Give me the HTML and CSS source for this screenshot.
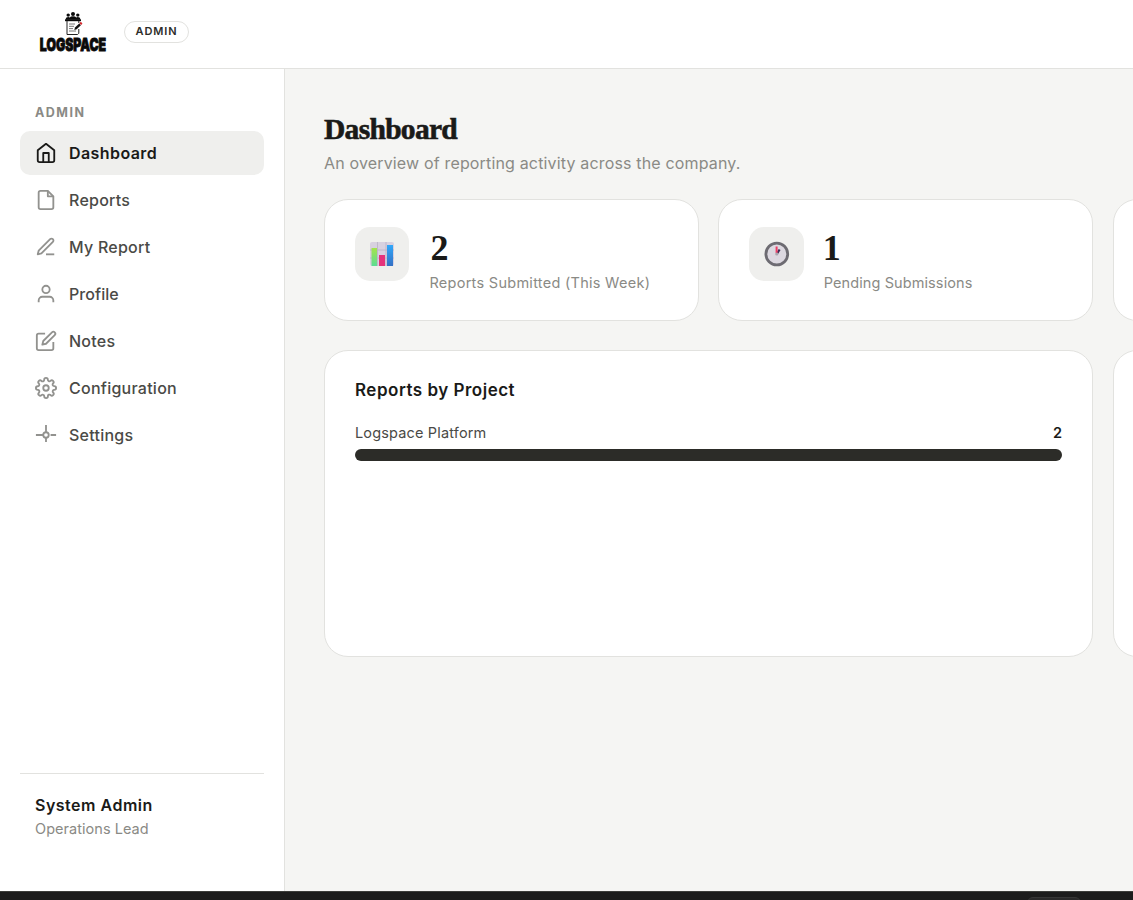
FILE: index.html
```html
<!DOCTYPE html>
<html lang="en">
<head>
<meta charset="utf-8">
<title>Logspace Dashboard</title>
<link rel="stylesheet" href="styles.css">
</head>
<body>
<div class="app">
  <header class="topbar">
    <svg class="logo" width="68" height="46" viewBox="0 0 68 46" role="img" aria-label="Logspace">
      <g fill="#0a0a0a">
        <circle cx="29.200" cy="4.100" r="1.700"/><circle cx="34" cy="3" r="2"/><circle cx="38.800" cy="4.100" r="1.700"/>
        <path d="M26.800 8.800V7.500q0-1.500 2.400-1.500 1.200 0 1.600.6Q31.500 5.300 34 5.300t3.200 1.300q.4-.6 1.600-.6 2.400 0 2.400 1.500V8.800z"/>
        <path d="M26 8.300h16v1.900H26z"/>
      </g>
      <path d="M28 10v13.500h10.600l1.200-1.200V18M39.800 12v-2" fill="none" stroke="#222" stroke-width="1"/>
      <path d="M30 13h6M30 15.300h5M30 17.600h4M30 20h7" stroke="#555" stroke-width=".8"/>
      <path d="M35.300 19l.7-2.400 4.200-4.100 1.700 1.700-4.200 4.100z" fill="#111"/>
      <path d="M40.300 12.300l1-1q.5-.5 1 0l.8.8q.5.500 0 1l-1 1z" fill="#d3262b"/>
      <text class="logo-word" x="0.800" y="39.600" textLength="66.300" lengthAdjust="spacingAndGlyphs">LOGSPACE</text>
    </svg>
    <span class="role-badge">ADMIN</span>
  </header>
  <div class="body">
    <aside class="sidebar">
      <div class="nav-heading">ADMIN</div>
      <nav class="nav">
        <a class="nav-item active"><svg class="icon" viewBox="0 0 24 24"><path d="M3 9l9-7 9 7v11a2 2 0 0 1-2 2H5a2 2 0 0 1-2-2z"/><path d="M9 22V12h6v10"/></svg><span>Dashboard</span></a>
        <a class="nav-item"><svg class="icon" viewBox="0 0 24 24"><path d="M14 2H6a2 2 0 0 0-2 2v16a2 2 0 0 0 2 2h12a2 2 0 0 0 2-2V8z"/><path d="M14 2v6h6"/></svg><span>Reports</span></a>
        <a class="nav-item"><svg class="icon" viewBox="0 0 24 24"><path d="M12 20h9"/><path d="M16.500 3.500a2.121 2.121 0 0 1 3 3L7 19l-4 1 1-4z"/></svg><span>My Report</span></a>
        <a class="nav-item"><svg class="icon" viewBox="0 0 24 24"><path d="M20 21v-2a4 4 0 0 0-4-4H8a4 4 0 0 0-4 4v2"/><circle cx="12" cy="7" r="4"/></svg><span class="snug">Profile</span></a>
        <a class="nav-item"><svg class="icon" viewBox="0 0 24 24"><path d="M11 4H4a2 2 0 0 0-2 2v14a2 2 0 0 0 2 2h14a2 2 0 0 0 2-2v-7"/><path d="M18.500 2.500a2.121 2.121 0 0 1 3 3L12 15l-4 1 1-4z"/></svg><span>Notes</span></a>
        <a class="nav-item"><svg class="icon" viewBox="0 0 24 24"><circle cx="12" cy="12" r="3"/><path d="M19.400 15a1.650 1.650 0 0 0 .33 1.820l.06.06a2 2 0 0 1-2.830 2.830l-.06-.06a1.650 1.650 0 0 0-1.820-.33 1.650 1.650 0 0 0-1 1.510V21a2 2 0 0 1-4 0v-.09A1.650 1.650 0 0 0 9 19.400a1.650 1.650 0 0 0-1.820.33l-.06.06a2 2 0 0 1-2.830-2.830l.06-.06a1.650 1.650 0 0 0 .33-1.820 1.650 1.650 0 0 0-1.510-1H3a2 2 0 0 1 0-4h.09A1.650 1.650 0 0 0 4.600 9a1.650 1.650 0 0 0-.33-1.820l-.06-.06a2 2 0 0 1 2.830-2.830l.06.06a1.650 1.650 0 0 0 1.820.33H9a1.650 1.650 0 0 0 1-1.510V3a2 2 0 0 1 4 0v.09a1.650 1.650 0 0 0 1 1.510 1.650 1.650 0 0 0 1.820-.33l.06-.06a2 2 0 0 1 2.830 2.830l-.06.06a1.650 1.650 0 0 0-.33 1.820V9a1.650 1.650 0 0 0 1.510 1H21a2 2 0 0 1 0 4h-.09a1.650 1.650 0 0 0-1.510 1z"/></svg><span>Configuration</span></a>
        <a class="nav-item"><svg class="icon" viewBox="0 0 24 24"><circle cx="12" cy="12" r="3"/><path d="M12 1v8M12 15v4.500M1 12h8M17 12h6"/></svg><span>Settings</span></a>
      </nav>
      <div class="user">
        <div class="user-name">System Admin</div>
        <div class="user-role">Operations Lead</div>
      </div>
    </aside>
    <main class="main">
      <h1 class="title">Dashboard</h1>
      <p class="subtitle">An overview of reporting activity across the company.</p>
      <div class="grid">
        <section class="card stat">
          <div class="stat-icon">
            <svg width="26" height="26" viewBox="0 0 26 26">
              <defs><linearGradient id="green" x2="0" y2="1"><stop stop-color="#a5e34c"/><stop offset="1" stop-color="#5bdc94"/></linearGradient><linearGradient id="blue" x2="0" y2="1"><stop stop-color="#31a8fa"/><stop offset="1" stop-color="#3470c4"/></linearGradient></defs>
              <rect x="1" y="1" width="24" height="24" rx="2" fill="#d8d1e0"/>
              <path d="M8.500 1v24M17 1v24M1 9h24M1 17h24" stroke="#bdb4c8" stroke-width=".9"/>
              <path d="M2.500 7h5.500v18H2.500z" fill="url(#green)"/><path d="M10 14h6v11h-6z" fill="#e5327b"/><path d="M18 4h6v21h-6z" fill="url(#blue)"/>
            </svg>
          </div>
          <div><div class="stat-value">2</div><div class="stat-label wide">Reports Submitted (This Week)</div></div>
        </section>
        <section class="card stat">
          <div class="stat-icon">
            <svg width="26" height="26" viewBox="0 0 26 26">
              <circle cx="12.800" cy="13" r="10.900" fill="#dcd8e0" stroke="#6d6b72" stroke-width="2.800"/>
              <path d="M12.800 13l2.800-4.500" stroke="#3c2c55" stroke-width="2.200"/><path d="M12.600 12V5.500" stroke="#ed3c64" stroke-width="2"/><circle cx="12.800" cy="13" r="1.600" fill="#aaa4ae"/>
            </svg>
          </div>
          <div><div class="stat-value one">1</div><div class="stat-label">Pending Submissions</div></div>
        </section>
        <section class="card stat"></section>
        <section class="card projects">
          <h2 class="card-title">Reports by Project</h2>
          <div class="bar-row"><span>Logspace Platform</span><span class="bar-value">2</span></div>
          <div class="bar"></div>
        </section>
        <section class="card"></section>
      </div>
    </main>
  </div>
  <div class="taskbar"><div class="task-tab"></div></div>
</div>
</body>
</html>
```
FILE: styles.css
```css
* { box-sizing: border-box; }
body { margin: 0; font-family: Inter, sans-serif; color: #1a1a18; background: #f5f5f3; overflow: hidden; }
.app { height: 900px; display: flex; flex-direction: column; overflow: hidden; }
.topbar { flex: none; height: 69px; display: flex; align-items: flex-start; padding: 11px 39px; gap: 17px; background: #fff; border-bottom: 1px solid #e2e2df; }
.logo { display: block; overflow: visible; }
.logo-word { font: 900 17.500px Inter, sans-serif; fill: #0a0a0a; stroke: #0a0a0a; stroke-width: .9px; }
.role-badge { width: 65px; height: 22px; margin-top: 10px; border: 1px solid #e2e2df; border-radius: 11px; font-size: 11px; font-weight: 600; line-height: 19px; letter-spacing: .9px; padding-left: 10.500px; color: #2c2c29; }
.body { flex: none; height: 822px; display: flex; }
.sidebar { flex: none; width: 285px; background: #fff; border-right: 1px solid #e2e2df; padding: 34px 20px 0; display: flex; flex-direction: column; }
.nav-heading { font-size: 12.500px; font-weight: 650; line-height: 20px; letter-spacing: 1.500px; color: #8a8a85; padding-left: 15px; margin-bottom: 8px; }
.nav { display: flex; flex-direction: column; gap: 3px; }
.nav-item { height: 44px; display: flex; align-items: center; gap: 12px; padding: 0 15px; border-radius: 10px; font-size: 16px; font-weight: 450; letter-spacing: .25px; color: #4a4a46; }
.nav-item.active { background: #efefed; color: #1a1a18; font-weight: 600; letter-spacing: .42px; }
.snug { letter-spacing: .05px; }
.icon { width: 22px; height: 22px; fill: none; stroke: #92928f; stroke-width: 2; stroke-linejoin: round; overflow: visible; }
.active .icon { stroke: #1a1a18; }
.user { margin-top: auto; height: 118px; padding: 19px 15px 0; border-top: 1px solid #e2e2df; }
.user-name { font-size: 16px; font-weight: 600; line-height: 24px; letter-spacing: .5px; margin-bottom: 1px; }
.user-role { font-size: 14.500px; line-height: 22px; letter-spacing: .04px; color: #8a8a85; }
.main { flex: none; width: 1224px; padding: 43px 0 0 39px; }
.title { margin: 0; font: bold 29.500px/34px "Liberation Serif", serif; letter-spacing: -.7px; -webkit-text-stroke: .6px #1a1a18; }
.subtitle { margin: 5px 0 0; font-size: 16px; line-height: 24px; letter-spacing: .16px; color: #8a8a85; }
.grid { width: 1163.400px; margin-top: 24px; display: grid; grid-template-columns: repeat(3, 1fr); grid-template-rows: 122px 307px; gap: 29px 19.600px; }
.card { background: #fff; border: 1px solid #e2e2df; border-radius: 24px; padding: 27px 30px; }
.stat { display: flex; gap: 20px; }
.stat-icon { flex: none; width: 54.400px; height: 54px; border-radius: 15px; background: #efefed; display: flex; align-items: center; justify-content: center; }
.stat-value { font: bold 36px/42px "Liberation Serif", serif; padding-left: 1px; }
.stat-value.one { margin-left: -2px; }
.stat-label { font-size: 14.500px; line-height: 24px; margin-top: 2px; letter-spacing: .1px; color: #8a8a85; white-space: nowrap; }
.stat-label.wide { letter-spacing: .28px; }
.projects { grid-column: span 2; }
.card-title { margin: 0; font-size: 17px; font-weight: 600; line-height: 24px; letter-spacing: .5px; }
.bar-row { display: flex; justify-content: space-between; margin-top: 19px; font-size: 14.500px; line-height: 24px; letter-spacing: .16px; color: #4a4a46; }
.bar-value { font-weight: 600; letter-spacing: 0; color: #1a1a18; }
.bar { height: 12px; margin-top: 4px; border-radius: 6px; background: #2c2c28; }
.taskbar { flex: none; height: 9px; background: #1c1c1c; border-top: 1px solid #3c3d3a; padding: 5px 0 0 1027px; overflow: hidden; }
.task-tab { width: 54px; height: 20px; border: 1px solid #363636; border-radius: 6px; background: #292929; }
```
